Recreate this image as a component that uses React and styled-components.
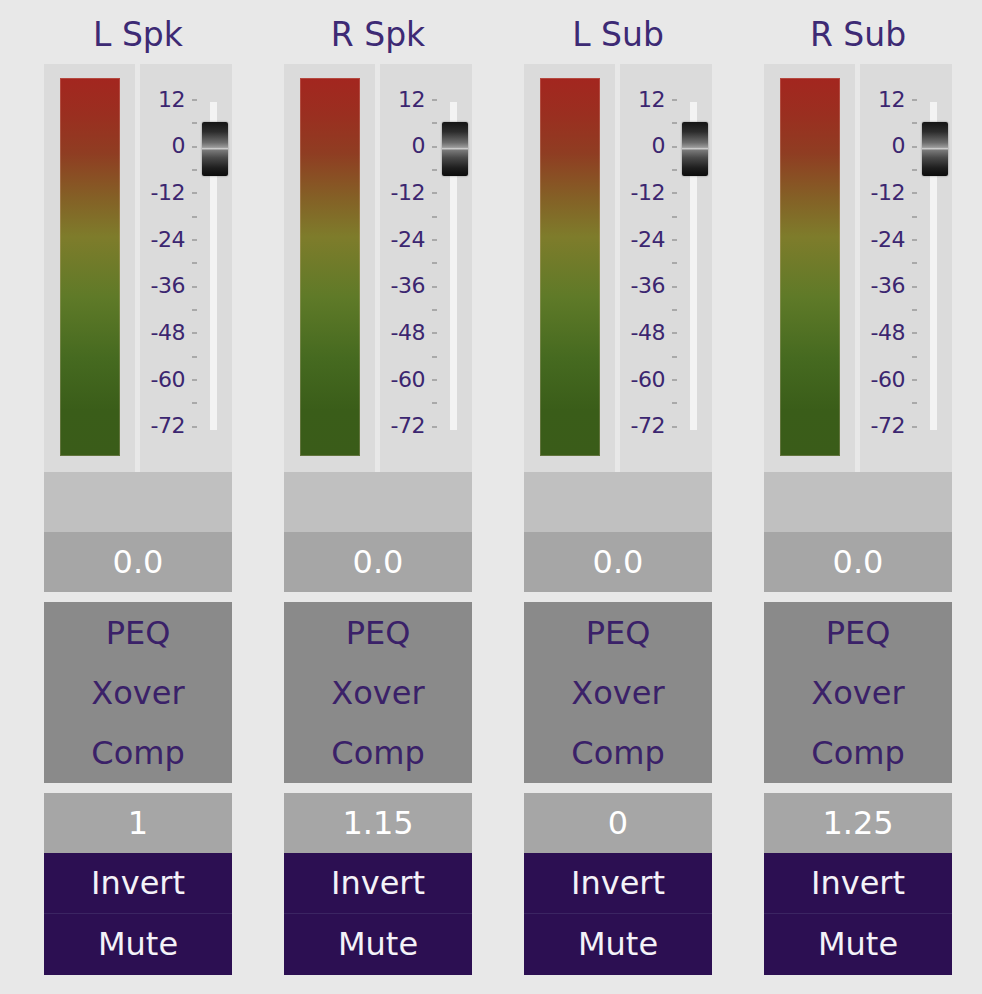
import React from "react";
import styled, { createGlobalStyle } from "styled-components";

const Global = createGlobalStyle`
  html, body {
    margin: 0;
    padding: 0;
    background: #e8e8e8;
  }
  body {
    font-family: "DejaVu Sans", Verdana, sans-serif;
  }
`;

const Page = styled.div`
  display: flex;
  gap: 52px;
  padding-left: 44px;
  width: 982px;
  height: 994px;
  box-sizing: border-box;
  background: #e8e8e8;
`;

const Strip = styled.div`
  width: 188px;
  display: flex;
  flex-direction: column;
`;

const Title = styled.div`
  height: 64px;
  box-sizing: border-box;
  padding-top: 6px;
  line-height: 58px;
  font-size: 33px;
  color: #3d2a74;
  text-align: center;
  white-space: nowrap;
`;

const MeterArea = styled.div`
  height: 408px;
  display: flex;
  gap: 5px;
`;

const BarPanel = styled.div`
  width: 91px;
  background: #dbdbdb;
  box-sizing: border-box;
  padding: 14px 0 0 16px;
`;

const Bar = styled.div`
  width: 60px;
  height: 378px;
  box-sizing: border-box;
  border: 1px solid rgba(255, 210, 200, 0.2);
  background-origin: border-box;
  background-image: linear-gradient(
    to bottom,
    #a3261f 0%,
    #9a2f20 10%,
    #8f3d22 20%,
    #846126 32%,
    #7e7c2b 42%,
    #5f7a28 58%,
    #466a20 74%,
    #3a5d19 88%,
    #3a5c19 100%
  );
`;

const ScalePanel = styled.div`
  width: 92px;
  background: #dbdbdb;
  display: flex;
`;

const Scale = styled.div`
  width: 58px;
  display: flex;
  flex-direction: column;
  padding-top: 12.65px;
`;

const ScaleRow = styled.div`
  position: relative;
  height: 46.7px;
  display: flex;
  align-items: center;
`;

const ScaleLabel = styled.span`
  width: 45px;
  text-align: right;
  font-size: 22px;
  line-height: 46.7px;
  color: #3b2670;
  letter-spacing: -0.5px;
`;

const Tick = styled.span`
  width: 5px;
  height: 2px;
  margin-left: 7px;
  background: #a9a9a9;
  ${(p) =>
    p.$minor &&
    `
    &::after {
      content: "";
      position: absolute;
      left: 52px;
      bottom: -1px;
      width: 5px;
      height: 2px;
      background: #a9a9a9;
    }
  `}
`;

const SliderCol = styled.div`
  margin-left: 12px;
  padding-top: 38px;
`;

const Track = styled.div`
  position: relative;
  width: 7px;
  height: 328px;
  background: #f3f3f3;
`;

const Knob = styled.div`
  position: absolute;
  left: -8px;
  top: 20px;
  width: 26px;
  height: 54px;
  border-radius: 2px;
  box-shadow: 0 0 2px rgba(0, 0, 0, 0.45);
  background: linear-gradient(
    to bottom,
    #141414 0%,
    #2c2c2c 18%,
    #6c6c6c 38%,
    #9a9a9a 47%,
    #d4d4d4 49.5%,
    #7a7a7a 52%,
    #4a4a4a 66%,
    #1e1e1e 85%,
    #0c0c0c 100%
  );
`;

const Block = styled.div`
  height: ${(p) => p.$h || 60}px;
  background: ${(p) => p.$bg};
`;

const ValueBox = styled.div`
  height: 60px;
  background: #a6a6a6;
  color: #ffffff;
  font-size: 32px;
  line-height: 60px;
  text-align: center;
`;

const Menu = styled.div`
  margin-top: 10px;
  background: #8a8a8a;
  display: flex;
  flex-direction: column;
  padding-top: 1px;
`;

const MenuItem = styled.div`
  height: 60px;
  line-height: 60px;
  text-align: center;
  font-size: 32px;
  color: #3a2168;
`;

const ActionButton = styled.div`
  height: ${(p) => (p.$last ? 62 : 60)}px;
  line-height: 60px;
  box-sizing: border-box;
  background: #2c0f52;
  color: #f4f2f8;
  font-size: 32px;
  text-align: center;
  ${(p) => p.$last && `border-top: 1px solid #3b2562;`}
`;

const channels = [
  { name: "L Spk", level: "0.0", delay: "1" },
  { name: "R Spk", level: "0.0", delay: "1.15" },
  { name: "L Sub", level: "0.0", delay: "0" },
  { name: "R Sub", level: "0.0", delay: "1.25" },
];

const scale = ["12", "0", "-12", "-24", "-36", "-48", "-60", "-72"];

function Channel({ ch }) {
  return (
    <Strip>
      <Title>{ch.name}</Title>
      <MeterArea>
        <BarPanel>
          <Bar />
        </BarPanel>
        <ScalePanel>
          <Scale>
            {scale.map((s, i) => (
              <ScaleRow key={s}>
                <ScaleLabel>{s}</ScaleLabel>
                <Tick $minor={i < scale.length - 1} />
              </ScaleRow>
            ))}
          </Scale>
          <SliderCol>
            <Track>
              <Knob />
            </Track>
          </SliderCol>
        </ScalePanel>
      </MeterArea>
      <Block $bg="#c0c0c0" />
      <ValueBox>{ch.level}</ValueBox>
      <Menu>
        <MenuItem>PEQ</MenuItem>
        <MenuItem>Xover</MenuItem>
        <MenuItem>Comp</MenuItem>
      </Menu>
      <Block $h={10} $bg="transparent" />
      <ValueBox>{ch.delay}</ValueBox>
      <ActionButton>Invert</ActionButton>
      <ActionButton $last>Mute</ActionButton>
    </Strip>
  );
}

export default function App() {
  return (
    <>
      <Global />
      <Page>
        {channels.map((c) => (
          <Channel key={c.name} ch={c} />
        ))}
      </Page>
    </>
  );
}
